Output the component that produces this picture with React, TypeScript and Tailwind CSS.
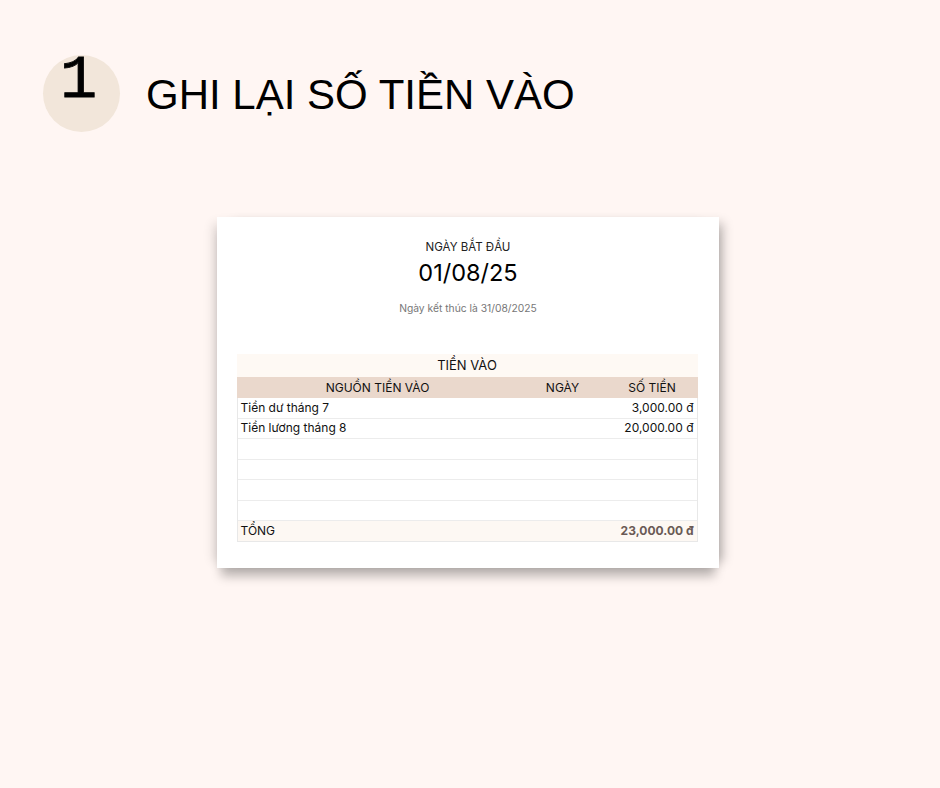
import React from "react";

const inter = { fontFamily: "Inter, 'Noto Sans', sans-serif" };

export default function App() {
  const rows = [
    { name: "Tiền dư tháng 7", amount: "3,000.00 đ" },
    { name: "Tiền lương tháng 8", amount: "20,000.00 đ" },
    { name: "", amount: "" },
    { name: "", amount: "" },
    { name: "", amount: "" },
    { name: "", amount: "" },
  ];
  return (
    <div className="w-[940px] h-[788px] bg-[#fff6f3] overflow-hidden relative">
      {/* Header */}
      <div className="flex items-center pt-[55px] pl-[43px]">
        <div className="relative w-[77px] h-[77px] rounded-full bg-[#f2e6da] shrink-0">
          <span
            className="absolute left-[17px] top-[-5px] text-[62px] leading-none text-black [-webkit-text-stroke:0.8px_black]"
            style={{ fontFamily: "'Liberation Mono', 'DejaVu Sans Mono', monospace" }}
          >
            1
          </span>
        </div>
        <div
          className="ml-[26px] text-[42px] leading-none text-black mt-[2px]"
          style={{ fontFamily: "'Liberation Sans', Arial, sans-serif" }}
        >
          GHI LẠI SỐ TIỀN VÀO
        </div>
      </div>

      {/* Card */}
      <div className="pl-[217px] pt-[85px]">
        <div
          className="w-[502px] h-[351px] bg-white shadow-[0_12px_10px_-4px_rgba(0,0,0,0.28),10px_0_10px_-6px_rgba(0,0,0,0.25),-10px_0_10px_-6px_rgba(0,0,0,0.12)] flex flex-col items-center"
          style={inter}
        >
          <div className="mt-[23px] text-[11.5px] leading-[14px] text-[#222]">NGÀY BẮT ĐẦU</div>
          <div className="mt-[4px] text-[23.5px] leading-[30px] text-black">01/08/25</div>
          <div className="mt-[14px] text-[10.3px] leading-[12px] text-[#777]">Ngày kết thúc là 31/08/2025</div>

          <div className="mt-[40px] w-[461px] ml-[-2px] text-[12px] text-[#111]">
            <div className="h-[23px] bg-[#fef9f4] flex items-center justify-center text-[13px]">TIỀN VÀO</div>
            <div className="h-[21px] bg-[#ead8cc] flex items-center">
              <div className="w-[282px] text-center">NGUỒN TIỀN VÀO</div>
              <div className="w-[88px] text-center">NGÀY</div>
              <div className="flex-1 text-center">SỐ TIỀN</div>
            </div>
            <div className="border-x border-[#e8e8e8]">
              {rows.map((r, i) => (
                <div key={i} className="h-[20.5px] border-b border-[#ececec] flex items-center px-[3px]">
                  <div className="flex-1">{r.name}</div>
                  <div className="text-right">{r.amount}</div>
                </div>
              ))}
              <div className="h-[21px] bg-[#fdf8f3] border-b border-[#e8e8e8] flex items-center px-[3px]">
                <div className="flex-1">TỔNG</div>
                <div className="text-right font-bold text-[#6a5a55]">23,000.00 đ</div>
              </div>
            </div>
          </div>
        </div>
      </div>
    </div>
  );
}
